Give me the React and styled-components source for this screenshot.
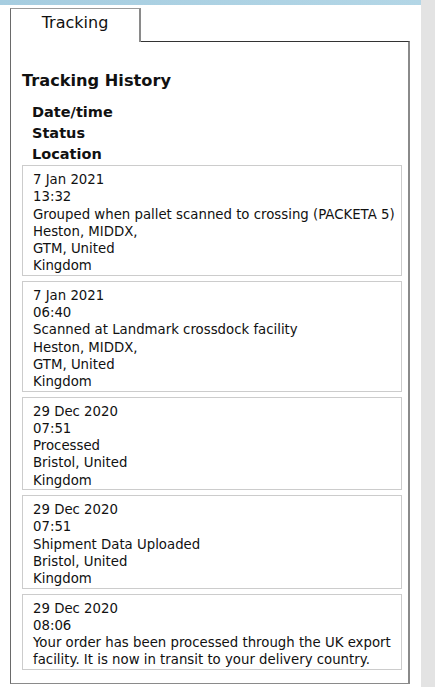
import React from 'react';
import styled, { createGlobalStyle } from 'styled-components';

const GlobalStyle = createGlobalStyle`
    body {
        margin: 0;
        background-color: #ffffff;
        font-family: "DejaVu Sans", Verdana, sans-serif;
        color: #111111;
    }
`

const Page = styled.div`
    display: flex;
    min-height: 687px;
`

const Main = styled.div`
    width: 421px;
    flex-shrink: 0;
`

const Scrollbar = styled.div`
    flex: 1;
    background-color: #e3e3e3;
`

const TopBar = styled.div`
    height: 5px;
    background: linear-gradient(to right, #a6cde0, #b3d6e6);
`

const Content = styled.div`
    padding: 3px 11px 0 10px;
`

const TabRow = styled.div`
    display: flex;
`

const Tab = styled.div`
    position: relative;
    z-index: 1;
    width: 128px;
    height: 33px;
    margin-bottom: -1px;
    background-color: #ffffff;
    border-top: 1px solid #9a9a9a;
    border-left: 1px solid #6a6a6a;
    border-right: 2px solid #8a8a8a;
    font-size: 16px;
    text-align: center;
    line-height: 28px;
    color: #111111;
`

const Panel = styled.div`
    border-top: 1px solid #333333;
    border-left: 1px solid #6a6a6a;
    border-right: 2px solid #8a8a8a;
    border-bottom: 1px solid #8a8a8a;
    padding: 0 6px 13px 11px;
`

const Title = styled.h3`
    margin: 29px 0 9px;
    font-size: 16.2px;
    line-height: 20px;
    font-weight: bold;
`

const Labels = styled.div`
    padding: 2px 0 0 10px;
`

const Label = styled.div`
    font-size: 14.5px;
    font-weight: bold;
    line-height: 21px;
`

const List = styled.div`
    display: flex;
    flex-direction: column;
    gap: 5px;
`

const Card = styled.div`
    border: 1px solid #cccccc;
    padding: 5px 3px 0 10px;
    font-size: 13.3px;
    line-height: 17.3px;
`

const Line = styled.div`
    white-space: nowrap;
`

const events = [
    { date: '7 Jan 2021', time: '13:32', status: ['Grouped when pallet scanned to crossing (PACKETA 5)'], location: ['Heston, MIDDX,', 'GTM, United', 'Kingdom'] },
    { date: '7 Jan 2021', time: '06:40', status: ['Scanned at Landmark crossdock facility'], location: ['Heston, MIDDX,', 'GTM, United', 'Kingdom'] },
    { date: '29 Dec 2020', time: '07:51', status: ['Processed'], location: ['Bristol, United', 'Kingdom'] },
    { date: '29 Dec 2020', time: '07:51', status: ['Shipment Data Uploaded'], location: ['Bristol, United', 'Kingdom'] },
    { date: '29 Dec 2020', time: '08:06', status: ['Your order has been processed through the UK export', 'facility. It is now in transit to your delivery country.'], location: [] },
]

const App = () => {
    return (
        <>
            <GlobalStyle />
            <Page>
                <Main>
                    <TopBar />
                    <Content>
                        <TabRow>
                            <Tab>Tracking</Tab>
                        </TabRow>
                        <Panel>
                            <Title>Tracking History</Title>
                            <Labels>
                                <Label>Date/time</Label>
                                <Label>Status</Label>
                                <Label>Location</Label>
                            </Labels>
                            <List>
                                {events.map((e, i) => (
                                    <Card key={i}>
                                        <Line>{e.date}</Line>
                                        <Line>{e.time}</Line>
                                        {e.status.map((s, j) => <Line key={'s' + j}>{s}</Line>)}
                                        {e.location.map((l, j) => <Line key={'l' + j}>{l}</Line>)}
                                    </Card>
                                ))}
                            </List>
                        </Panel>
                    </Content>
                </Main>
                <Scrollbar />
            </Page>
        </>
    );
};

export default App;
